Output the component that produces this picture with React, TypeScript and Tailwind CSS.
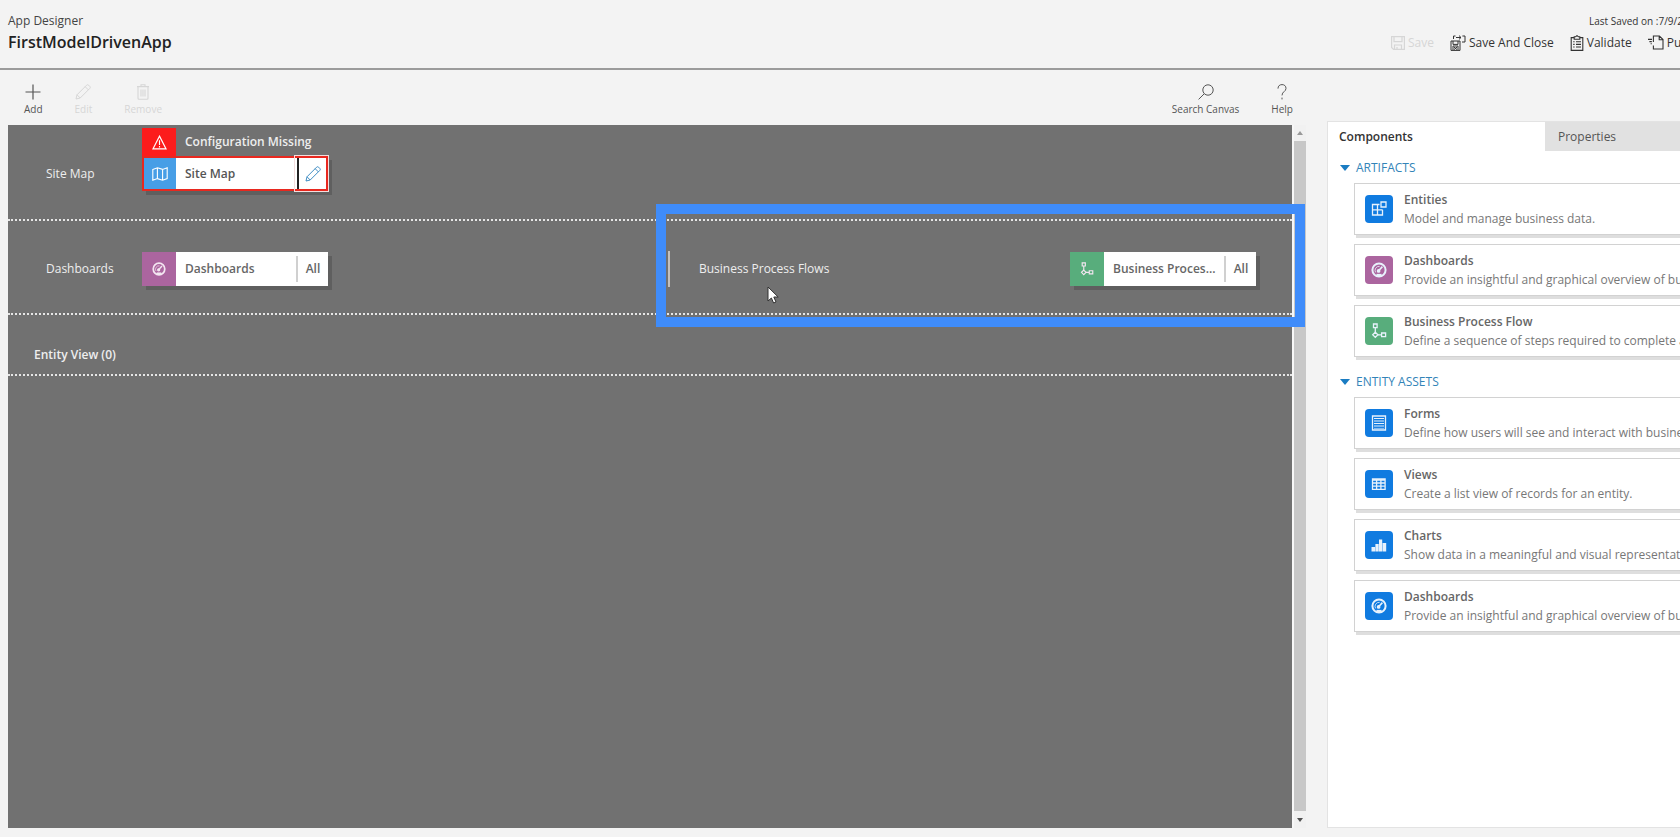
import React, { useState } from "react";

type IconName = "entities" | "gauge" | "flow" | "form" | "grid" | "chart";

interface ComponentItem {
    title: string;
    text: string;
    icon: IconName;
    color: string;
}

const artifacts: ComponentItem[] = [
    { title: "Entities", text: "Model and manage business data.", icon: "entities", color: "bg-[#107be0]" },
    { title: "Dashboards", text: "Provide an insightful and graphical overview of business data.", icon: "gauge", color: "bg-[#ab659f]" },
    { title: "Business Process Flow", text: "Define a sequence of steps required to complete a process.", icon: "flow", color: "bg-[#58ad7c]" },
];

const entityAssets: ComponentItem[] = [
    { title: "Forms", text: "Define how users will see and interact with business data.", icon: "form", color: "bg-[#107be0]" },
    { title: "Views", text: "Create a list view of records for an entity.", icon: "grid", color: "bg-[#107be0]" },
    { title: "Charts", text: "Show data in a meaningful and visual representation.", icon: "chart", color: "bg-[#107be0]" },
    { title: "Dashboards", text: "Provide an insightful and graphical overview of business data.", icon: "gauge", color: "bg-[#107be0]" },
];

const Icon = ({ name, className }: { name: IconName; className: string }) => (
    <svg viewBox="0 0 16 16" className={className} fill="none" stroke="currentColor" strokeWidth="1.3">
        {name === "entities" && (
            <>
                <path d="M1.5 3.5h5v10.5h-5zM1.5 8.8h10M6.5 8.8V14h5V8.8M6.5 3.5h2" />
                <path d="M10 1h5v5h-5z" />
            </>
        )}
        {name === "gauge" && (
            <>
                <circle cx="8" cy="8" r="6.6" strokeWidth="2" />
                <path d="M4.6 10.4a4 4 0 0 1 4-6" strokeWidth=".8" />
                <path d="M7.6 8.8L11.4 4.6" strokeWidth="1.6" />
                <circle cx="7.6" cy="8.9" r="1.2" fill="currentColor" />
                <path d="M5.4 13.2h5.2" strokeWidth="2.6" />
            </>
        )}
        {name === "flow" && (
            <>
                <path d="M2.5 1h3.6v3.6H2.5zM4.3 4.6v4.6M6.8 11.8h3.4M10.6 10h4v3.6h-4z" />
                <path d="M4.3 9.2l2.6 2.6-2.6 2.6-2.6-2.6z" />
            </>
        )}
        {name === "form" && (
            <>
                <path d="M1.5 1h13v14h-13z" />
                <path d="M3 3.5h10M3 6h10M3 8.5h10M3 11h10" strokeWidth="1.1" />
                <path d="M3 13.4h10" strokeWidth="1" opacity=".6" />
            </>
        )}
        {name === "grid" && <path d="M1.5 3h12.6v10.4H1.5zM1.5 4h12.6M1.5 7h12.6M1.5 10.2h12.6M5.6 4v9.4M9.9 4v9.4" />}
        {name === "chart" && (
            <path d="M.5 10h3.6v4.6H.5zM4.4 7h3.3v7.6H4.4zM8 2.5h3.2v12.1H8zM11.6 6h3.6v8.6h-3.6z" fill="currentColor" stroke="none" />
        )}
    </svg>
);

const Pencil = ({ className }: { className: string }) => (
    <svg viewBox="0 0 16 16" className={className} fill="none" stroke="currentColor" strokeWidth="1">
        <path d="M1 15l1-4.2L11.6 1.2a1.4 1.4 0 0 1 2 0l1.2 1.2a1.4 1.4 0 0 1 0 2L5.2 14zM10.2 2.7l3.2 3.2M2 10.8L5.2 14" />
    </svg>
);

const ToolButton = ({ label, disabled, children }: { label: string; disabled?: boolean; children: React.ReactNode }) => (
    <button
        disabled={disabled}
        className="flex flex-col items-center gap-[3px] text-[10px] leading-3 font-medium text-[#555] disabled:text-[#d6d6d6]"
    >
        {children}
        {label}
    </button>
);

const CanvasCard = ({ label, icon, color }: { label: string; icon: IconName; color: string }) => (
    <div className="flex h-[34px] w-[186px] items-center bg-white text-[12px] font-semibold text-[#666] shadow-[4px_4px_0_#5f5f5f]">
        <span className={`flex h-full w-[34px] shrink-0 items-center justify-center text-[#f3e6f1] ${color}`}>
            <Icon name={icon} className="size-[14px]" />
        </span>
        <span className="flex-1 pl-[9px] whitespace-nowrap">{label}</span>
        <button className="h-[26px] w-8 border-l-2 border-[#d0d0d0]">All</button>
    </div>
);

const ComponentSection = ({ title, items }: { title: string; items: ComponentItem[] }) => {
    const [open, setOpen] = useState(true);

    return (
        <section className="pt-[3px]">
            <button onClick={() => setOpen(!open)} className="flex h-7 items-center gap-[6px] pl-3 text-[12px] font-medium text-[#3384b8]">
                <svg viewBox="0 0 10 6" className="h-[6px] w-[10px]" fill="#1a7cc2">
                    <path d="M0 0h10L5 6z" />
                </svg>
                {title}
            </button>
            {open && (
                <ul className="mt-px flex flex-col gap-[9px] pl-[26px]">
                    {items.map((item) => (
                        <li
                            key={item.title}
                            className="flex h-[52px] items-center gap-[11px] border border-r-0 border-[#d2d2d2] bg-white pl-[10px] shadow-[2px_3px_0_#dedede]"
                        >
                            <span className={`flex size-7 shrink-0 items-center justify-center rounded text-[#e8f2fc] ${item.color}`}>
                                <Icon name={item.icon} className="size-4" />
                            </span>
                            <div className="whitespace-nowrap text-[12px] leading-[19px]">
                                <h3 className="font-semibold text-[#666]">{item.title}</h3>
                                <p className="text-[#777]">{item.text}</p>
                            </div>
                        </li>
                    ))}
                </ul>
            )}
        </section>
    );
};

const App = () => {
    const [tab, setTab] = useState("components");

    return (
        <div className="flex min-h-screen flex-col overflow-hidden bg-[#f3f3f3] font-['Open_Sans','Noto_Sans',sans-serif]">
            <header className="flex h-[70px] justify-between border-b-2 border-[#9b9b9b] pt-3">
                <div className="pl-2">
                    <p className="text-[12px] leading-[18px] text-[#444]">App Designer</p>
                    <h1 className="text-[16px] leading-6 font-semibold text-[#222]">FirstModelDrivenApp</h1>
                </div>
                <div className="w-[289px] text-[#333]">
                    <p className="pl-[198px] text-[10px] leading-[18px] whitespace-nowrap">Last Saved on :7/9/2</p>
                    <div className="flex h-[26px] items-center gap-4 text-[12px] font-medium whitespace-nowrap">
                        <button disabled className="flex items-center gap-[3px] disabled:text-[#d6d6d6]">
                            <svg viewBox="0 0 14 14" className="size-[14px]" fill="none" stroke="currentColor" strokeWidth="1.2">
                                <path d="M.6.6h12.8v12.8H2.6l-2-2zM3 .6v5h8v-5M3.5 13.4V9h7v4.4M6 11v2" />
                            </svg>
                            Save
                        </button>
                        <button className="flex items-center gap-[3px]">
                            <svg viewBox="0 0 16 16" className="size-4" fill="none" stroke="currentColor" strokeWidth="1">
                                <path d="M1 6h9v9.4H1zM3 6v3.4h5V6M3 15v-4h5v4M4 12l3 2.6M7 12l-3 2.6" />
                                <path d="M3.5 4V1h2M6 2.5h5M9 .6l2 1.9-2 1.9M12.4 1H15v6h-3" />
                            </svg>
                            Save And Close
                        </button>
                        <button className="flex items-center gap-[3px]">
                            <svg viewBox="0 0 14 16" className="h-4 w-[14px]" fill="none" stroke="currentColor" strokeWidth="1.1">
                                <path d="M4 2.6H1.2v12.8h11.6V2.6H10M4.2 1.8h1.4L7 .6l1.4 1.2h1.4v2.4H4.2z" />
                                <path d="M3.2 6.8h1.4M6 6.8h5M3.2 9.4h1.4M6 9.4h5M3.2 12h1.4M6 12h5" />
                            </svg>
                            Validate
                        </button>
                        <button className="flex items-center gap-[3px]">
                            <svg viewBox="0 0 16 16" className="size-4" fill="none" stroke="currentColor" strokeWidth="1.1">
                                <path d="M5.4 7V1h6L15 4.6V14H5.4v-3.4M11.2 1v3.8H15M0 4.4h4M1.4 6.6h2.4M2.6 8.8h1.2" />
                            </svg>
                            Publish
                        </button>
                    </div>
                </div>
            </header>

            <div className="flex flex-1 gap-[21px] pb-[9px] pl-2">
                <main className="flex min-w-0 flex-1 flex-col">
                    <div className="flex h-[55px] items-start justify-between pt-[14px] pr-[13px] pl-4">
                        <div className="flex gap-8">
                            <ToolButton label="Add">
                                <svg viewBox="0 0 16 16" className="size-4" fill="none" stroke="currentColor" strokeWidth="1.2">
                                    <path d="M8 .5v15M.5 8h15" />
                                </svg>
                            </ToolButton>
                            <ToolButton label="Edit" disabled>
                                <Pencil className="size-4" />
                            </ToolButton>
                            <ToolButton label="Remove" disabled>
                                <svg viewBox="0 0 16 16" className="size-4" fill="none" stroke="currentColor" strokeWidth="1.1">
                                    <path d="M2 2.6h12M6 2.4V.8h4v1.6M3 2.8v11.4a1 1 0 0 0 1 1h8a1 1 0 0 0 1-1V2.8" />
                                    <path d="M6 5.4v7M8 5.4v7M10 5.4v7" />
                                </svg>
                            </ToolButton>
                        </div>
                        <div className="flex gap-8">
                            <ToolButton label="Search Canvas">
                                <svg viewBox="0 0 16 16" className="size-4" fill="none" stroke="currentColor" strokeWidth="1">
                                    <circle cx="10" cy="6" r="5.2" />
                                    <path d="M6.2 9.8L.6 15.4" />
                                </svg>
                            </ToolButton>
                            <ToolButton label="Help">
                                <svg viewBox="0 0 16 16" className="size-4" fill="none" stroke="currentColor" strokeWidth="1">
                                    <path d="M4 4.6C4 2 5.6.6 8 .6s4 1.4 4 3.8C12 7.6 8 7.6 8 11.4M8 13.6v1.8" />
                                </svg>
                            </ToolButton>
                        </div>
                    </div>

                    <div className="flex flex-1">
                        <div className="min-w-0 flex-1 bg-[#717171] text-[12px] font-medium text-[#eee]">
                            <div className="flex h-24 border-b-2 border-dotted border-[#e6e6e6] pt-[3px]">
                                <p className="w-[134px] pt-[37px] pl-[38px] leading-[18px]">Site Map</p>
                                <div>
                                    <div className="flex h-7 items-center gap-[9px] font-semibold">
                                        <span className="flex h-full w-[34px] items-center justify-center bg-[#fc1c1c]">
                                            <svg viewBox="0 0 16 16" className="size-[15px]" fill="none" stroke="#fff" strokeWidth="1.2">
                                                <path d="M8 1.2L15 14.8H1zM8 5.6v5M8 11.8v1.6" />
                                            </svg>
                                        </span>
                                        Configuration Missing
                                    </div>
                                    <div className="flex h-[35px] w-[186px] border-2 border-[#e8281f] bg-white font-semibold text-[#555] shadow-[4px_4px_0_#5f5f5f]">
                                        <span className="flex w-8 items-center justify-center bg-[#479ee6]">
                                            <svg viewBox="0 0 16 14" className="h-[14px] w-4" fill="none" stroke="#fff" strokeWidth="1.1">
                                                <path d="M.8 2.4L5.4.8l5.2 1.6L15.2.8v10.8l-4.6 1.6-5.2-1.6-4.6 1.6zM5.4.8v10.8M10.6 2.4v10.8" />
                                            </svg>
                                        </span>
                                        <span className="flex flex-1 items-center pl-[9px]">Site Map</span>
                                        <button
                                            aria-label="Edit site map"
                                            className="flex w-[29px] items-center justify-center border-l-2 border-[#222] text-[#3f8dc4] outline-1 outline-offset-2 outline-[#f3dede]"
                                        >
                                            <Pencil className="size-4" />
                                        </button>
                                    </div>
                                </div>
                            </div>

                            <div className="flex h-[94px] items-center border-b-2 border-dotted border-[#e6e6e6]">
                                <div className="flex flex-1 items-center pt-[3px]">
                                    <p className="w-[134px] pl-[38px]">Dashboards</p>
                                    <CanvasCard label="Dashboards" icon="gauge" color="bg-[#ab659f]" />
                                </div>
                                <div className="relative flex h-full w-[624px] items-center justify-between pt-[3px] pr-9">
                                    <p className="flex h-9 items-center border-l-2 border-[#c4c0bc] pl-[29px]">Business Process Flows</p>
                                    <CanvasCard label="Business Proces..." icon="flow" color="bg-[#58ad7c]" />
                                    <div className="pointer-events-none absolute -top-[17px] -right-[13px] -bottom-[14px] -left-3 z-10 border-[10px] border-[#3f8cfa]" />
                                    <svg viewBox="0 0 12 18" className="absolute top-[65px] left-[99px] h-[18px] w-3" fill="#fff" stroke="#333">
                                        <path d="M1 1v14l3.4-3 2.2 5 2.4-1-2.2-5h4.4z" />
                                    </svg>
                                </div>
                            </div>

                            <div className="flex h-[61px] items-end border-b-2 border-dotted border-[#e6e6e6] pb-[10px] pl-[26px] leading-[18px] font-semibold">
                                Entity View (0)
                            </div>
                        </div>

                        <div className="flex w-[14px] flex-col border-l-2 border-[#f7f7f7] bg-[#f1f1f1]">
                            <button aria-label="Scroll up" className="flex h-4 items-center justify-center">
                                <svg viewBox="0 0 6 4" className="h-1 w-[6px]" fill="#999">
                                    <path d="M0 4h6L3 0z" />
                                </svg>
                            </button>
                            <div className="flex-1 bg-[#c7c7c7]" />
                            <button aria-label="Scroll down" className="flex h-[17px] items-center justify-center">
                                <svg viewBox="0 0 6 4" className="h-1 w-[6px]" fill="#505050">
                                    <path d="M0 0h6L3 4z" />
                                </svg>
                            </button>
                        </div>
                    </div>
                </main>

                <aside className="mt-[51px] w-[353px] shrink-0 overflow-hidden border border-r-0 border-[#e3e3e3] bg-white">
                    <div role="tablist" className="flex h-[29px] text-[12px]">
                        <button
                            role="tab"
                            aria-selected={tab === "components"}
                            onClick={() => setTab("components")}
                            className="w-[217px] pl-[11px] text-left font-semibold text-[#333] aria-[selected=false]:bg-[#e1e1e1]"
                        >
                            Components
                        </button>
                        <button
                            role="tab"
                            aria-selected={tab === "properties"}
                            onClick={() => setTab("properties")}
                            className="flex-1 pl-[13px] text-left font-medium text-[#555] aria-[selected=false]:bg-[#e1e1e1]"
                        >
                            Properties
                        </button>
                    </div>
                    {tab === "components" && (
                        <>
                            <ComponentSection title="ARTIFACTS" items={artifacts} />
                            <div className="pt-2">
                                <ComponentSection title="ENTITY ASSETS" items={entityAssets} />
                            </div>
                        </>
                    )}
                </aside>
            </div>
        </div>
    );
};

export default App;
